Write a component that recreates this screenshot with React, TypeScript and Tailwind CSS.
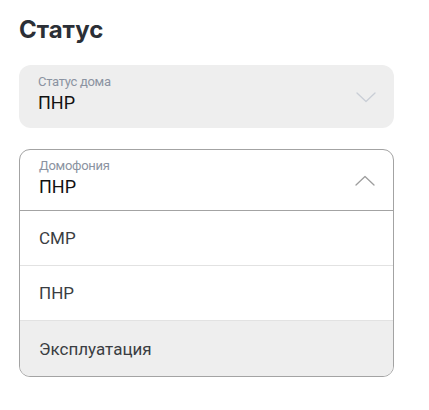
const options = ['СМР', 'ПНР', 'Эксплуатация'];

function Chevron({ up, color }: { up?: boolean; color: string }) {
    return (
        <svg width="20" height="11" viewBox="0 0 20 11" fill="none" className="shrink-0">
            <path
                d={up ? 'M1 10L10 1.5L19 10' : 'M1 1L10 9.5L19 1'}
                stroke={color}
                strokeWidth="1.3"
                strokeLinecap="round"
                strokeLinejoin="round"
            />
        </svg>
    );
}

export default function App() {
    const selected = 'Эксплуатация';

    return (
        <div className="min-h-[410px] w-[429px] bg-white px-[19px] pt-[15px] font-['Roboto',sans-serif]">
            <h2 className="font-['Inter',sans-serif] text-[24px] leading-[30px] font-bold text-[#2b2f36]">Статус</h2>

            {/* Closed select */}
            <div className="mt-[20px] w-[375px] h-[63px] rounded-[12px] bg-[#eeeeee] flex justify-between pl-[19px] pr-[18px]">
                <div className="flex flex-col pt-[9px]">
                    <span className="text-[13px] leading-[15px] text-[#8b93a1] tracking-[-0.3px]">Статус дома</span>
                    <span className="mt-[3px] text-[18px] leading-[22px] text-[#111111]">ПНР</span>
                </div>
                <div className="self-center mt-[1px]">
                    <Chevron color="#c9ced6" />
                </div>
            </div>

            {/* Open select */}
            <div className="mt-[21px] w-[375px] rounded-[11px] border border-[#a3a3a3] overflow-hidden">
                <div className="h-[61px] border-b border-[#a3a3a3] flex justify-between pl-[19px] pr-[18px]">
                    <div className="flex flex-col pt-[8px]">
                        <span className="text-[13px] leading-[15px] text-[#8b93a1] tracking-[-0.3px]">Домофония</span>
                        <span className="mt-[3px] text-[18px] leading-[22px] text-[#111111]">ПНР</span>
                    </div>
                    <div className="self-center mt-[1px]">
                        <Chevron up color="#9e9e9e" />
                    </div>
                </div>
                {options.map((opt, i) => (
                    <div
                        key={opt}
                        className={`h-[55px] flex items-center pl-[19px] text-[17px] leading-[20px] text-[#3a3d42] ${
                            i < options.length - 1 ? 'border-b border-[#e2e2e2]' : ''
                        } ${opt === selected ? 'bg-[#eeeeee]' : 'bg-white'}`}
                    >
                        {opt}
                    </div>
                ))}
            </div>
        </div>
    );
}
